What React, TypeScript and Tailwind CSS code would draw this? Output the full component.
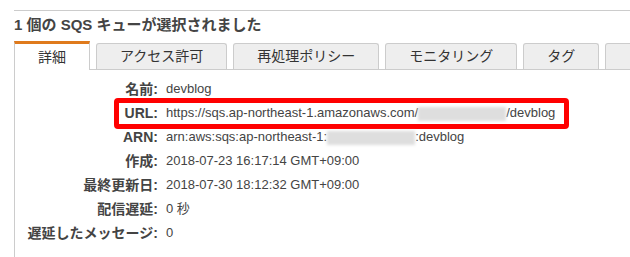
import React from 'react'

const font = { fontFamily: '"Liberation Sans", "Noto Sans CJK JP", sans-serif' }

const tabs = ['アクセス許可', '再処理ポリシー', 'モニタリング', 'タグ', '']

function Blur({ w }: { w: string }) {
  return <span className={`inline-block h-[14px] bg-[#dedede] blur-[1.5px] align-middle ${w}`} />
}

function Row({ label, children }: { label: string; children: React.ReactNode }) {
  return (
    <div className="flex h-[24px] items-center">
      <div className="w-[143px] shrink-0 text-right text-[14px] font-bold text-[#444]">{label}:</div>
      <div className="ml-[8px] whitespace-nowrap text-[13px] text-[#444]">{children}</div>
    </div>
  )
}

export default function App() {
  return (
    <div className="h-[257px] w-[630px] overflow-hidden bg-white pt-[10px] text-[14px]" style={font}>
      <div className="ml-[14px] border-t border-[#cccccc]" />
      <div className="ml-[14px] mt-[4px] h-[20px] text-[15px] font-bold leading-[20px] text-[#444]">
        1 個の SQS キューが選択されました
      </div>

      {/* Tabs */}
      <div className="ml-[14px] mt-[6px] flex items-end gap-[6px] whitespace-nowrap border-b border-[#cccccc]">
        <div className="relative -mb-px flex h-[29px] items-center border-x border-t-[3px] border-[#cccccc] border-t-[#df7a1c] bg-white px-[23px] text-[#333]">
          詳細
        </div>
        {tabs.map((t, i) => (
          <div
            key={i}
            className={`flex h-[26px] items-center rounded-t-[3px] border-x border-t border-[#cccccc] bg-[#eeeeee] px-[23px] text-[#333] ${t === '' ? 'w-[80px]' : ''}`}
          >
            {t}
          </div>
        ))}
      </div>

      {/* Details */}
      <div className="ml-[14px] h-[200px] border-l border-[#cccccc] pt-[7px]">
        <Row label="名前">devblog</Row>
        <div className="relative">
          <Row label="URL">
            https://sqs.ap-northeast-1.amazonaws.com/
            <Blur w="w-[88px]" />
            /devblog
          </Row>
          <div className="pointer-events-none absolute left-[99px] top-[-3px] h-[31px] w-[455px] rounded-[4px] border-[5px] border-[#ff0000]" />
        </div>
        <Row label="ARN">
          arn:aws:sqs:ap-northeast-1:
          <Blur w="w-[88px]" />
          :devblog
        </Row>
        <Row label="作成">2018-07-23 16:17:14 GMT+09:00</Row>
        <Row label="最終更新日">2018-07-30 18:12:32 GMT+09:00</Row>
        <Row label="配信遅延">0 秒</Row>
        <Row label="遅延したメッセージ">0</Row>
      </div>
    </div>
  )
}
